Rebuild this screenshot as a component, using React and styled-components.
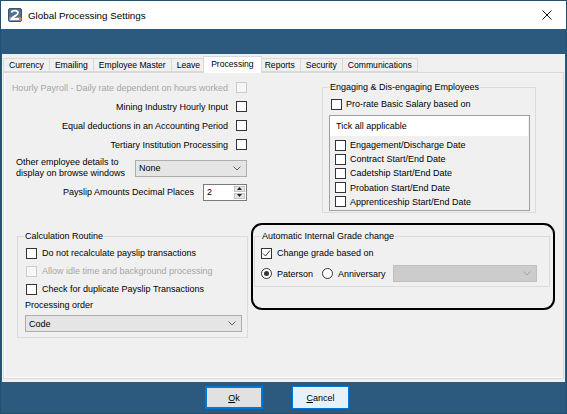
import React from 'react'
import styled, { createGlobalStyle } from 'styled-components'

const BLUE = '#2b5a7e'

const GlobalStyle = createGlobalStyle`
  html, body {
    margin: 0;
    padding: 0;
  }
  body {
    font-family: 'Liberation Sans', Arial, sans-serif;
    font-size: 9px;
    color: #000;
  }
  * {
    box-sizing: border-box;
  }
`

const Window = styled.div`
  width: 567px;
  height: 414px;
  background: ${BLUE};
  border: 1px solid #24506f;
  display: flex;
  flex-direction: column;
  overflow: hidden;
`
const TitleBar = styled.div`
  height: 28px;
  flex: none;
  background: #fff;
  display: flex;
  align-items: center;
  padding-left: 7px;
  gap: 5px;
`
const TitleText = styled.span`
  font-size: 9.8px;
  color: #000;
`
const CloseButton = styled.span`
  margin-left: auto;
  margin-right: 14px;
  display: flex;
`
const Band = styled.div`
  height: 25px;
  flex: none;
`
const Body = styled.div`
  height: 328px;
  flex: none;
  margin: 0 1px;
  background: #f0f0f0;
  padding: 4px 1px 3px 1px;
  display: flex;
  flex-direction: column;
`
const TabStrip = styled.div`
  height: 14px;
  display: flex;
  align-items: flex-start;
  position: relative;
  z-index: 1;
`
const Tab = styled.div`
  height: ${(p) => (p.$active ? '17px' : '14px')};
  margin-top: ${(p) => (p.$active ? '-2px' : '0')};
  margin-left: ${(p) => (p.$active ? '-2px' : '0')};
  margin-right: ${(p) => (p.$active ? '-3px' : '-1px')};
  padding: 0 ${(p) => (p.$active ? '7px' : '5px')};
  border: 1px solid #d9d9d9;
  border-bottom: ${(p) => (p.$active ? 'none' : '1px solid #d9d9d9')};
  background: ${(p) => (p.$active ? '#fff' : '#f0f0f0')};
  position: relative;
  z-index: ${(p) => (p.$active ? 2 : 1)};
  font-size: 8.6px;
  line-height: ${(p) => (p.$active ? '14px' : '12px')};
  white-space: nowrap;
`
const Panel = styled.div`
  flex: 1;
  border: 1px solid #d9d9d9;
  box-shadow: inset 1px -1px 0 #fff;
  background: #f0f0f0;
  padding-top: 5px;
  display: flex;
  flex-direction: column;
`
const TopRow = styled.div`
  display: flex;
  align-items: flex-start;
`
const LeftBlock = styled.div`
  width: 233px;
  margin-left: 10px;
  display: flex;
  flex-direction: column;
`
const OptionRow = styled.div`
  height: 19px;
  display: flex;
  align-items: center;
  justify-content: flex-end;
  gap: 8px;
  color: ${(p) => (p.$disabled ? '#a6a6a6' : '#000')};
  white-space: nowrap;
`
const BoxWrap = styled.span`
  width: 11px;
  height: 11px;
  flex: none;
  border: 1px solid ${(p) => (p.$disabled ? '#cccccc' : '#333')};
  background: ${(p) => (p.$disabled ? '#f7f7f7' : '#fff')};
  display: flex;
  align-items: center;
  justify-content: center;
`
const RadioWrap = styled.span`
  width: 11px;
  height: 11px;
  flex: none;
  border: 1px solid #333;
  border-radius: 50%;
  background: #fff;
  display: flex;
  align-items: center;
  justify-content: center;
`
const RadioDot = styled.span`
  width: 5px;
  height: 5px;
  border-radius: 50%;
  background: #333;
`
const RadioText = styled.span`
  margin-left: 5px;
  margin-right: ${(p) => p.$mr}px;
`
const SelectRow = styled.div`
  margin-top: 4px;
  height: 20px;
  display: flex;
  align-items: center;
  justify-content: space-between;
  padding-left: 2px;
`
const TwoLineLabel = styled.span`
  line-height: 10.6px;
`
const Select = styled.div`
  width: ${(p) => p.$w}px;
  height: 17px;
  flex: none;
  margin-left: ${(p) => p.$ml ?? 0}px;
  margin-top: ${(p) => p.$mt ?? 0}px;
  border: 1px solid ${(p) => (p.$disabled ? '#bfbfbf' : '#adadad')};
  background: ${(p) => (p.$disabled ? '#cccccc' : '#e5e5e5')};
  display: flex;
  align-items: center;
  justify-content: space-between;
  padding: 0 5px 0 3px;
`
const SpinRow = styled.div`
  margin-top: 5px;
  height: 18px;
  display: flex;
  align-items: center;
  justify-content: flex-end;
  gap: 9px;
`
const Spin = styled.div`
  width: 44px;
  height: 17px;
  border: 1px solid #7a7a7a;
  background: #fff;
  display: flex;
`
const SpinValue = styled.span`
  flex: 1;
  padding-left: 3px;
  line-height: 15px;
`
const SpinButtons = styled.div`
  width: 13px;
  display: flex;
  flex-direction: column;
  gap: 1px;
  padding: 1px;
`
const SpinButton = styled.div`
  flex: 1;
  background: #e5e5e5;
  border: 1px solid #c4c4c4;
  display: flex;
  align-items: center;
  justify-content: center;
`
const Group = styled.fieldset`
  margin: 0;
  margin-top: ${(p) => p.$mt ?? 0}px;
  margin-left: ${(p) => p.$ml ?? 0}px;
  width: ${(p) => (p.$w ? `${p.$w}px` : 'auto')};
  border: 1px solid #dcdcdc;
  padding: ${(p) => p.$pad};
  min-width: 0;
`
const Legend = styled.legend`
  padding: 0 1px;
  line-height: 11px;
  font-size: 9px;
`
const CheckLine = styled.div`
  height: ${(p) => p.$h ?? 14}px;
  margin-top: ${(p) => p.$mt ?? 0}px;
  padding-left: ${(p) => p.$pl ?? 0}px;
  display: flex;
  align-items: center;
  gap: ${(p) => p.$gap ?? 5}px;
  color: ${(p) => (p.$disabled ? '#a6a6a6' : '#000')};
  white-space: nowrap;
`
const ListBox = styled.div`
  margin-top: 4px;
  width: 201px;
  height: 96px;
  border: 1px solid #a0a0a0;
  background: #f0f0f0;
`
const ListHeader = styled.div`
  height: 20px;
  margin: 0 1px 0 0;
  background: #fff;
  padding-left: 6px;
  line-height: 20px;
`
const ListItems = styled.div`
  padding: 2px 0 0 5px;
  display: flex;
  flex-direction: column;
`
const ListItem = styled.div`
  height: 14.2px;
  display: flex;
  align-items: center;
  gap: 4px;
`
const BottomRow = styled.div`
  margin-top: 10px;
  display: flex;
  align-items: flex-start;
`
const Label = styled.div`
  height: 14px;
  line-height: 14px;
  padding-left: 1px;
`
const Highlight = styled.div`
  margin-left: 3px;
  width: 304px;
  height: 87px;
  border: 2px solid #000;
  border-radius: 11px;
  padding: 0 3px 0 1px;
`
const Footer = styled.div`
  height: 31px;
  flex: none;
  display: flex;
  align-items: center;
  padding-left: 204px;
  gap: 29px;
`
const DialogButton = styled.div`
  width: ${(p) => (p.$primary ? 58 : 57)}px;
  height: 23px;
  border: ${(p) => (p.$primary ? '2px' : '1px')} solid #0078d7;
  background: ${(p) => (p.$primary ? '#e1e1e1' : '#e5f1fb')};
  display: flex;
  align-items: center;
  justify-content: center;
  font-size: 9px;
  u {
    text-decoration: underline;
  }
`

function Check({ checked, disabled }) {
  return (
    <BoxWrap $disabled={disabled}>
      {checked && (
        <svg width="9" height="9" viewBox="0 0 9 9">
          <path d="M1 4.5 L3.5 7 L8 1.5" fill="none" stroke="#333" strokeWidth="1" />
        </svg>
      )}
    </BoxWrap>
  )
}

function Radio({ checked }) {
  return <RadioWrap>{checked && <RadioDot />}</RadioWrap>
}

function Chevron({ color = '#606060' }) {
  return (
    <svg width="8" height="5" viewBox="0 0 8 5">
      <path d="M0.5 0.5 L4 4 L7.5 0.5" fill="none" stroke={color} strokeWidth="1" />
    </svg>
  )
}

function AppIcon() {
  return (
    <svg width="15" height="14" viewBox="0 0 15 14">
      <rect x="0.5" y="0.5" width="13" height="13" rx="1.5" fill="#53708c" stroke="#3b536b" />
      <rect x="1" y="9" width="12" height="4" fill="#7e93a8" />
      <path d="M3.5 4.5 C4 2 10 2 10 5 C10 7.5 5 8 3.5 11 L11 11" fill="none" stroke="#fff" strokeWidth="1.8" />
      <path d="M12 9.5 L14.5 11 L12 12.5 Z" fill="#e38b2c" />
    </svg>
  )
}

const tabs = ['Currency', 'Emailing', 'Employee Master', 'Leave', 'Processing', 'Reports', 'Security', 'Communications']
const dates = [
  'Engagement/Discharge Date',
  'Contract Start/End Date',
  'Cadetship Start/End Date',
  'Probation Start/End Date',
  'Apprenticeship Start/End Date',
]

export default function App() {
  return (
    <>
      <GlobalStyle />
      <Window>
        <TitleBar>
          <AppIcon />
          <TitleText>Global Processing Settings</TitleText>
          <CloseButton>
            <svg width="10" height="10" viewBox="0 0 10 10">
              <path d="M0.5 0.5 L9.5 9.5 M9.5 0.5 L0.5 9.5" stroke="#111" strokeWidth="1" />
            </svg>
          </CloseButton>
        </TitleBar>
        <Band />
        <Body>
          <TabStrip>
            {tabs.map((t) => (
              <Tab key={t} $active={t === 'Processing'}>
                {t}
              </Tab>
            ))}
          </TabStrip>
          <Panel>
            <TopRow>
              <LeftBlock>
                <OptionRow $disabled>
                  Hourly Payroll - Daily rate dependent on hours worked
                  <Check disabled />
                </OptionRow>
                <OptionRow>
                  Mining Industry Hourly Input
                  <Check />
                </OptionRow>
                <OptionRow>
                  Equal deductions in an Accounting Period
                  <Check />
                </OptionRow>
                <OptionRow>
                  Tertiary Institution Processing
                  <Check />
                </OptionRow>
                <SelectRow>
                  <TwoLineLabel>
                    Other employee details to
                    <br />
                    display on browse windows
                  </TwoLineLabel>
                  <Select $w={112}>
                    None
                    <Chevron />
                  </Select>
                </SelectRow>
                <SpinRow>
                  Payslip Amounts Decimal Places
                  <Spin>
                    <SpinValue>2</SpinValue>
                    <SpinButtons>
                      <SpinButton>
                        <svg width="5" height="3" viewBox="0 0 5 3">
                          <path d="M0 3 L2.5 0 L5 3 Z" fill="#222" />
                        </svg>
                      </SpinButton>
                      <SpinButton>
                        <svg width="5" height="3" viewBox="0 0 5 3">
                          <path d="M0 0 L2.5 3 L5 0 Z" fill="#222" />
                        </svg>
                      </SpinButton>
                    </SpinButtons>
                  </Spin>
                </SpinRow>
              </LeftBlock>
              <Group $w={214} $ml={75} $mt={4} $pad="0 5px 1px 6px">
                <Legend>Engaging &amp; Dis-engaging Employees</Legend>
                <CheckLine $mt={4} $pl={2} $gap={4}>
                  <Check />
                  Pro-rate Basic Salary based on
                </CheckLine>
                <ListBox>
                  <ListHeader>Tick all applicable</ListHeader>
                  <ListItems>
                    {dates.map((d) => (
                      <ListItem key={d}>
                        <Check />
                        {d}
                      </ListItem>
                    ))}
                  </ListItems>
                </ListBox>
              </Group>
            </TopRow>
            <BottomRow>
              <Group $w={231} $ml={13} $mt={8} $pad="0 6px 5px 6px">
                <Legend>Calculation Routine</Legend>
                <CheckLine $h={18} $mt={2} $pl={2}>
                  <Check />
                  Do not recalculate payslip transactions
                </CheckLine>
                <CheckLine $h={18} $pl={2} $disabled>
                  <Check disabled />
                  Allow idle time and background processing
                </CheckLine>
                <CheckLine $h={18} $pl={2}>
                  <Check />
                  Check for duplicate Payslip Transactions
                </CheckLine>
                <Label>Processing order</Label>
                <Select $w={217} $ml={1} $mt={3}>
                  Code
                  <Chevron />
                </Select>
              </Group>
              <Highlight>
                <Group $mt={6} $pad="0 6px 4px 6px">
                  <Legend>Automatic Internal Grade change</Legend>
                  <CheckLine $mt={4}>
                    <Check checked />
                    Change grade based on
                  </CheckLine>
                  <CheckLine $h={17} $mt={5} $gap={0}>
                    <Radio checked />
                    <RadioText $mr={9}>Paterson</RadioText>
                    <Radio />
                    <RadioText $mr={7}>Anniversary</RadioText>
                    <Select $w={144} $disabled>
                      <span />
                      <Chevron color="#a0a0a0" />
                    </Select>
                  </CheckLine>
                </Group>
              </Highlight>
            </BottomRow>
          </Panel>
        </Body>
        <Footer>
          <DialogButton $primary>
            <span>
              <u>O</u>k
            </span>
          </DialogButton>
          <DialogButton>
            <span>
              <u>C</u>ancel
            </span>
          </DialogButton>
        </Footer>
      </Window>
    </>
  )
}
